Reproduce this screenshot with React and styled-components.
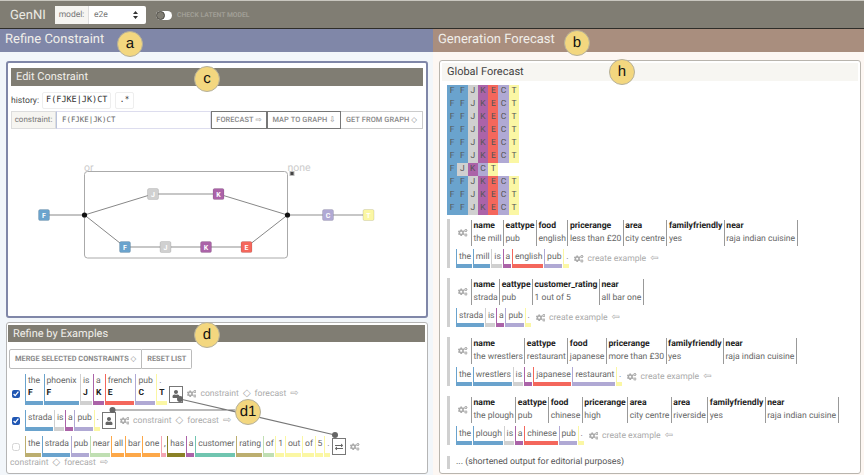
import React from 'react';
import styled, { createGlobalStyle } from 'styled-components';
import { FaCogs, FaUser, FaExchangeAlt } from 'react-icons/fa';

const colors = {
  F: '#6aa3cd', J: '#d0d0d0', K: '#ab63a8', E: '#f4675c', C: '#b0a9d4', T: '#fbf7a4',
  tan: '#bcae6f', green: '#c0dfb3', orange: '#fda849', pink: '#f4a6b4', olive: '#8a8126', teal: '#70c5b0',
};

const GlobalStyle = createGlobalStyle`
  html, body { margin: 0; padding: 0; background: #fff; }
  body {
    font-family: Roboto, "DejaVu Sans", sans-serif;
    text-rendering: geometricPrecision;
  }
`;

const Page = styled.div`
  position: relative;
  width: 864px;
  height: 475px;
  overflow: hidden;
`;

const TopBar = styled.header`
  display: flex;
  align-items: center;
  height: 29px;
  box-sizing: border-box;
  padding: 1px 0 0 10px;
  background: #807d73;
  border-top: 1px solid #c9c7bf;
  border-bottom: 1px solid #2e2d29;
`;

const Brand = styled.div`
  width: 45px;
  font-size: 13px;
  color: #ecebe4;
`;

const ModelSelect = styled.div`
  display: flex;
  width: 91px;
  height: 18px;
  background: #fff;
  border-radius: 2px;
  font-size: 8.5px;
  line-height: 18px;
  color: #777;
`;

const ModelLabel = styled.span`
  width: 33px;
  text-align: center;
  background: #f6f5f1;
  border-right: 1px solid #ddd;
`;

const ModelValue = styled.span`
  flex: 1;
  display: flex;
  justify-content: space-between;
  align-items: center;
  padding: 0 8px 0 5px;
`;

const Toggle = styled.span`
  position: relative;
  width: 16px;
  height: 9px;
  margin-left: 10px;
  background: #fff;
  border-radius: 5px;
  &::before {
    content: '';
    position: absolute;
    left: 0;
    top: 0;
    width: 7px;
    height: 7px;
    border: 1px solid #4c4a44;
    background: #807d73;
    border-radius: 50%;
  }
`;

const ToggleLabel = styled.span`
  margin-left: 5px;
  font-size: 6.8px;
  font-weight: 700;
  color: #a09f96;
`;

const Columns = styled.div`
  display: grid;
  grid-template-columns: 433px 431px;
  height: 446px;
`;

const Column = styled.section`
  background: ${p => p.$bg};
  display: flex;
  flex-direction: column;
`;

const ColumnHeader = styled.h1`
  margin: 0;
  height: 23px;
  padding-left: 5px;
  background: ${p => p.$bg};
  font-size: 13px;
  font-weight: 400;
  line-height: 22px;
  color: #f1efea;
`;

const EditPanel = styled.div`
  margin: 9px 5px 0 6px;
  height: 257px;
  box-sizing: border-box;
  padding: 5px 3px 0;
  background: #fff;
  border: 2px solid #8087a8;
  border-radius: 3px;
`;

const PanelTitle = styled.h2`
  margin: 0;
  height: ${p => p.$h || 18}px;
  padding-left: 5px;
  background: #807d73;
  font-size: 11px;
  font-weight: 400;
  line-height: ${p => p.$h || 18}px;
  color: #f1efea;
`;

const HistoryRow = styled.div`
  display: flex;
  align-items: center;
  gap: 3px;
  margin-top: 6px;
  font-size: 8.6px;
  color: #444;
`;

const Chip = styled.span`
  height: 15px;
  margin-right: 1px;
  padding: 0 3px;
  border: 1px solid #eee;
  border-radius: 2px;
  font-family: "DejaVu Sans Mono", monospace;
  font-size: 8.5px;
  line-height: 15px;
  color: #333;
`;

const ConstraintRow = styled.div`
  display: flex;
  height: 18px;
  margin-top: 2px;
  font-size: 8px;
  line-height: 16px;
`;

const Addon = styled.span`
  width: 45px;
  box-sizing: border-box;
  text-align: center;
  background: #f6f5f1;
  border: 1px solid #ddd;
  color: #777;
`;

const ConstraintInput = styled.span`
  flex: 1;
  padding-left: 5px;
  border: 1px solid #dde;
  border-left-color: #b9c3dd;
  font-family: "DejaVu Sans Mono", monospace;
  font-size: 7.4px;
  color: #666;
`;

const GraphButton = styled.span`
  width: ${p => p.$w}px;
  box-sizing: border-box;
  text-align: center;
  border: 1px solid ${p => (p.$light ? '#ccc' : '#777')};
  border-left: ${p => (p.$light ? 'none' : '1px solid #777')};
  font-weight: 500;
  font-size: 7.4px;
  letter-spacing: 0.1px;
  color: #888;
  white-space: nowrap;
`;

const Graph = styled.svg`
  display: block;
  margin-top: 2px;
`;

const ExamplesPanel = styled.div`
  margin: 4px 5px 0 6px;
  height: 152px;
  box-sizing: border-box;
  padding: 2px 2px 0 1px;
  background: #fff;
  border: 1px solid #b5b5b5;
  border-radius: 3px;
`;

const ToolRow = styled.div`
  display: flex;
  margin: 7px 0 5px 1px;
`;

const ToolButton = styled.span`
  height: 18px;
  padding: 0 ${p => p.$pad}px;
  border: 1px solid #bbb;
  border-left: ${p => (p.$join ? 'none' : '1px solid #bbb')};
  border-radius: ${p => (p.$join ? '0 2px 2px 0' : '2px 0 0 2px')};
  font-size: 7.4px;
  font-weight: 700;
  line-height: 17px;
  color: #8a8a8a;
  white-space: nowrap;
`;

const ExampleRow = styled.div`
  display: flex;
  flex-wrap: wrap;
  align-items: center;
  margin: 0 0 ${p => p.$gap}px 4px;
`;

const Check = styled.input.attrs({ type: 'checkbox', readOnly: true })`
  width: 8px;
  height: 8px;
  margin: ${p => (p.$low ? 9 : 0)}px 5px 0 0;
  accent-color: #1f56b3;
  &:not(:checked) { opacity: 0.3; }
`;

const Token = styled.span`
  display: inline-flex;
  flex-direction: column;
  height: ${p => p.$h}px;
  box-sizing: border-box;
  margin-right: 1px;
  padding: ${p => (p.$wide ? 1 : 2)}px ${p => (p.$wide ? 2.4 : 0.7)}px 0 2px;
  border-left: 1.5px solid ${p => p.$color};
  border-bottom: 4px solid ${p => p.$color};
  font-size: 8.6px;
  line-height: 12px;
  color: #666;
`;

const TokenTag = styled.b`
  font-size: 8.5px;
  font-weight: 700;
  line-height: 12px;
  color: #222;
`;

const IconBox = styled.span`
  display: flex;
  align-items: center;
  justify-content: center;
  width: 12px;
  height: 15px;
  margin: ${p => (p.$low ? 9 : 0)}px 0 0 1px;
  border: 1px solid #777;
  color: #666;
  font-size: 8px;
`;

const Links = styled.span`
  display: inline-flex;
  align-items: center;
  gap: 4px;
  margin: ${p => (p.$low ? 9 : 0)}px 0 0 4px;
  font-size: 8.6px;
  color: #aaa;
  white-space: nowrap;
`;

const WrappedLinks = styled(Links)`
  flex-basis: 100%;
  margin: 1px 0 0 -2px;
`;

const Glyph = styled.span`
  font-size: 10px;
  line-height: 10px;
  color: #aaa;
`;

const Cogs = styled(FaCogs)`
  flex: none;
  width: 9.5px;
  height: 9.5px;
  color: #aaa;
`;

const ForecastPanel = styled.div`
  flex: 1;
  margin: 8px 3px 1px 6px;
  padding: 2px;
  background: #fff;
  border: 1px solid #b9b5ae;
  border-radius: 3px;
`;

const ForecastTitle = styled.h2`
  margin: 0;
  height: 18px;
  padding-left: 5px;
  background: #f7f6f2;
  font-size: 11px;
  font-weight: 400;
  line-height: 18px;
  color: #444;
`;

const Matrix = styled.div`
  margin: 4px 0 4px 5px;
`;

const MatrixRow = styled.div`
  display: flex;
  height: 13px;
`;

const Cell = styled.span`
  width: 10.3px;
  background: ${p => p.$color};
  font-size: 8.5px;
  line-height: 13px;
  text-align: center;
  color: #555;
`;

const Item = styled.div`
  margin: 0 0 ${p => p.$gap}px 5px;
  border-left: 3px solid #d0d0d0;
`;

const SlotRow = styled.div`
  display: flex;
  align-items: center;
  height: 27px;
  padding-left: 8px;
`;

const SlotTable = styled.div`
  display: flex;
  margin-left: 3.5px;
  border-right: 1px solid #999;
`;

const Slot = styled.div`
  padding: 0 1.5px;
  border-left: 1px solid #999;
  font-size: 8.6px;
  line-height: 13px;
  color: #666;
  white-space: nowrap;
`;

const SlotName = styled.div`
  font-weight: 700;
  color: #222;
`;

const Sentence = styled.div`
  display: flex;
  align-items: center;
  margin: 3px 0 0 6px;
`;

const Shortened = styled.div`
  margin-left: 5px;
  padding-left: 6px;
  border-left: 3px solid #d0d0d0;
  font-size: 8.8px;
  line-height: 13px;
  color: #555;
`;

const Callout = styled.span`
  position: absolute;
  left: ${p => p.$x - 13}px;
  top: ${p => p.$y - 13}px;
  width: 26px;
  height: 26px;
  box-sizing: border-box;
  background: #f3d77f;
  border: 1px solid #b5b09a;
  border-radius: 50%;
  font-family: "Liberation Sans", sans-serif;
  font-size: 15px;
  line-height: 23px;
  text-align: center;
  color: #111;
  z-index: 3;
`;

const Leaders = styled.svg`
  position: absolute;
  left: 0;
  top: 0;
  z-index: 2;
  pointer-events: none;
`;

const nodes = [
  ['F', 44, 214], ['J', 153, 193], ['K', 218.5, 193], ['C', 328, 214], ['T', 368.5, 214],
  ['F', 125, 246], ['J', 165.5, 246], ['K', 206, 246], ['E', 246.5, 246],
];

const ConstraintGraph = () => (
  <Graph width="412" height="185" viewBox="11 130 412 185">
    <rect x="84.5" y="170.5" width="203" height="86.5" rx="3" fill="none" stroke="#aaa" strokeWidth="1" />
    <text x="84" y="169.5" fontSize="10.5" fill="#ccc">or</text>
    <text x="287.5" y="169.5" fontSize="10.5" fill="#ccc">none</text>
    <rect x="290" y="170.5" width="4" height="4" fill="#444" stroke="#bbb" strokeWidth="1" />
    <path d="M44 214H84.5L153 193M218.5 193L287.5 214M84.5 214L125 246M246.5 246L287.5 214" fill="none" stroke="#888" strokeWidth="1" />
    <path d="M153 193H218.5M125 246H246.5M287.5 214H368.5" fill="none" stroke="#b5b5b5" strokeWidth="1.5" />
    <circle cx="84.5" cy="214" r="2.6" fill="#111" />
    <circle cx="287.5" cy="214" r="2.6" fill="#111" />
    {nodes.map(([tag, x, y], i) => (
      <g key={i}>
        <rect x={x - 5.5} y={y - 5.5} width="11" height="11" rx="1.5" fill={colors[tag]} stroke="rgba(0,0,0,0.1)" />
        <text x={x} y={y + 2.5} fontSize="7" fontWeight="700" textAnchor="middle" fill="#fff">{tag}</text>
      </g>
    ))}
  </Graph>
);

const ConstraintLinks = ({ low, Wrap = Links }) => (
  <Wrap $low={low}>
    constraint <Glyph>◇</Glyph> forecast <Glyph>⇨</Glyph>
  </Wrap>
);

const examples = [
  [['the', 'F'], ['phoenix', 'F'], ['is', 'J'], ['a', 'K'], ['french', 'E'], ['pub', 'C'], ['.', 'T']],
  [['strada', 'F'], ['is', 'J'], ['a', 'K'], ['pub', 'C'], ['.', 'T']],
];

const longExample = [
  ['the', 'tan'], ['strada', 'F'], ['pub', 'C'], ['near', 'green'], ['all', 'orange'], ['bar', 'orange'],
  ['one', 'orange'], [',', 'pink'], ['has', 'olive'], ['a', 'K'], ['customer', 'teal'], ['rating', 'tan'],
  ['of', 'green'], ['1', 'T'], ['out', 'T'], ['of', 'T'], ['5', 'T'], ['.', 'T'],
];

const forecasts = [
  {
    slots: [['name', 'the mill'], ['eattype', 'pub'], ['food', 'english'], ['pricerange', 'less than £20'], ['area', 'city centre'], ['familyfriendly', 'yes'], ['near', 'raja indian cuisine']],
    words: [['the', 'F'], ['mill', 'F'], ['is', 'J'], ['a', 'K'], ['english', 'E'], ['pub', 'C'], ['.', 'T']],
  },
  {
    slots: [['name', 'strada'], ['eattype', 'pub'], ['customer_rating', '1 out of 5'], ['near', 'all bar one']],
    words: [['strada', 'F'], ['is', 'J'], ['a', 'K'], ['pub', 'C'], ['.', 'T']],
  },
  {
    slots: [['name', 'the wrestlers'], ['eattype', 'restaurant'], ['food', 'japanese'], ['pricerange', 'more than £30'], ['familyfriendly', 'yes'], ['near', 'raja indian cuisine']],
    words: [['the', 'F'], ['wrestlers', 'F'], ['is', 'J'], ['a', 'K'], ['japanese', 'E'], ['restaurant', 'C'], ['.', 'T']],
  },
  {
    slots: [['name', 'the plough'], ['eattype', 'pub'], ['food', 'chinese'], ['pricerange', 'high'], ['area', 'city centre'], ['area', 'riverside'], ['familyfriendly', 'yes'], ['near', 'raja indian cuisine']],
    words: [['the', 'F'], ['plough', 'F'], ['is', 'J'], ['a', 'K'], ['chinese', 'E'], ['pub', 'C'], ['.', 'T']],
  },
];

const fullRow = ['F', 'F', 'J', 'K', 'E', 'C', 'T'];
const shortRow = ['F', 'J', 'K', 'C', 'T'];
const matrix = [0, 1, 2, 3, 4, 5, 6, 7, 8, 9].map(i => (i === 6 ? shortRow : fullRow));

export default function App() {
  return (
    <Page>
      <GlobalStyle />
      <TopBar>
        <Brand>GenNI</Brand>
        <ModelSelect>
          <ModelLabel>model:</ModelLabel>
          <ModelValue>
            e2e
            <svg width="5" height="8" viewBox="0 0 5 8"><path d="M2.5 0L5 3H0zM2.5 8L0 5H5z" fill="#333" /></svg>
          </ModelValue>
        </ModelSelect>
        <Toggle />
        <ToggleLabel>CHECK LATENT MODEL</ToggleLabel>
      </TopBar>
      <Columns>
        <Column $bg="#f2f6fa">
          <ColumnHeader $bg="#8087a8">Refine Constraint</ColumnHeader>
          <EditPanel>
            <PanelTitle>Edit Constraint</PanelTitle>
            <HistoryRow>
              history:
              <Chip>F(FJKE|JK)CT</Chip>
              <Chip>.*</Chip>
            </HistoryRow>
            <ConstraintRow>
              <Addon>constraint:</Addon>
              <ConstraintInput>F(FJKE|JK)CT</ConstraintInput>
              <GraphButton $w={56}>FORECAST ⇨</GraphButton>
              <GraphButton $w={74}>MAP TO GRAPH ⇩</GraphButton>
              <GraphButton $w={82} $light>GET FROM GRAPH ◇</GraphButton>
            </ConstraintRow>
            <ConstraintGraph />
          </EditPanel>
          <ExamplesPanel>
            <PanelTitle $h={17}>Refine by Examples</PanelTitle>
            <ToolRow>
              <ToolButton $pad={5}>MERGE SELECTED CONSTRAINTS ◇</ToolButton>
              <ToolButton $pad={5} $join>RESET LIST</ToolButton>
            </ToolRow>
            <ExampleRow $gap={5}>
              <Check $low defaultChecked />
              {examples[0].map(([word, tag], i) => (
                <Token key={i} $h={31} $wide $color={colors[tag]}>
                  {word}
                  <TokenTag>{tag}</TokenTag>
                </Token>
              ))}
              <IconBox $low><FaUser /></IconBox>
              <Links $low><Cogs /></Links>
              <ConstraintLinks low />
            </ExampleRow>
            <ExampleRow $gap={5}>
              <Check defaultChecked />
              {examples[1].map(([word, tag], i) => (
                <Token key={i} $h={21} $color={colors[tag]}>{word}</Token>
              ))}
              <IconBox><FaUser /></IconBox>
              <Links><Cogs /></Links>
              <ConstraintLinks />
            </ExampleRow>
            <ExampleRow $gap={0}>
              <Check />
              {longExample.map(([word, tag], i) => (
                <Token key={i} $h={21} $color={colors[tag]}>{word}</Token>
              ))}
              <IconBox><FaExchangeAlt /></IconBox>
              <Links><Cogs /></Links>
              <ConstraintLinks Wrap={WrappedLinks} />
            </ExampleRow>
          </ExamplesPanel>
        </Column>
        <Column $bg="#fdf7f3">
          <ColumnHeader $bg="#a98e7e">Generation Forecast</ColumnHeader>
          <ForecastPanel>
            <ForecastTitle>Global Forecast</ForecastTitle>
            <Matrix>
              {matrix.map((row, r) => (
                <MatrixRow key={r}>
                  {row.map((tag, c) => <Cell key={c} $color={colors[tag]}>{tag}</Cell>)}
                </MatrixRow>
              ))}
            </Matrix>
            {forecasts.map((item, i) => (
              <Item key={i} $gap={i === 3 ? 11 : 10}>
                <SlotRow>
                  <Cogs />
                  <SlotTable>
                    {item.slots.map(([name, value], s) => (
                      <Slot key={s}>
                        <SlotName>{name}</SlotName>
                        {value}
                      </Slot>
                    ))}
                  </SlotTable>
                </SlotRow>
                <Sentence>
                  {item.words.map(([word, tag], w) => (
                    <Token key={w} $h={19} $color={colors[tag]}>{word}</Token>
                  ))}
                  <Links><Cogs /> create example <Glyph>⇦</Glyph></Links>
                </Sentence>
              </Item>
            ))}
            <Shortened>... (shortened output for editorial purposes)</Shortened>
          </ForecastPanel>
        </Column>
      </Columns>
      <Leaders width="864" height="475">
        <path d="M180 399L335 435M112.5 410H235" fill="none" stroke="#777" strokeWidth="1.2" />
        <circle cx="180" cy="399" r="3" fill="#666" />
        <circle cx="335" cy="435" r="3" fill="#666" />
        <circle cx="112.5" cy="410" r="3" fill="#666" />
      </Leaders>
      <Callout $x={130} $y={44}>a</Callout>
      <Callout $x={577} $y={43}>b</Callout>
      <Callout $x={207} $y={79}>c</Callout>
      <Callout $x={207} $y={335}>d</Callout>
      <Callout $x={248} $y={412}>d1</Callout>
      <Callout $x={622} $y={72}>h</Callout>
    </Page>
  );
}
